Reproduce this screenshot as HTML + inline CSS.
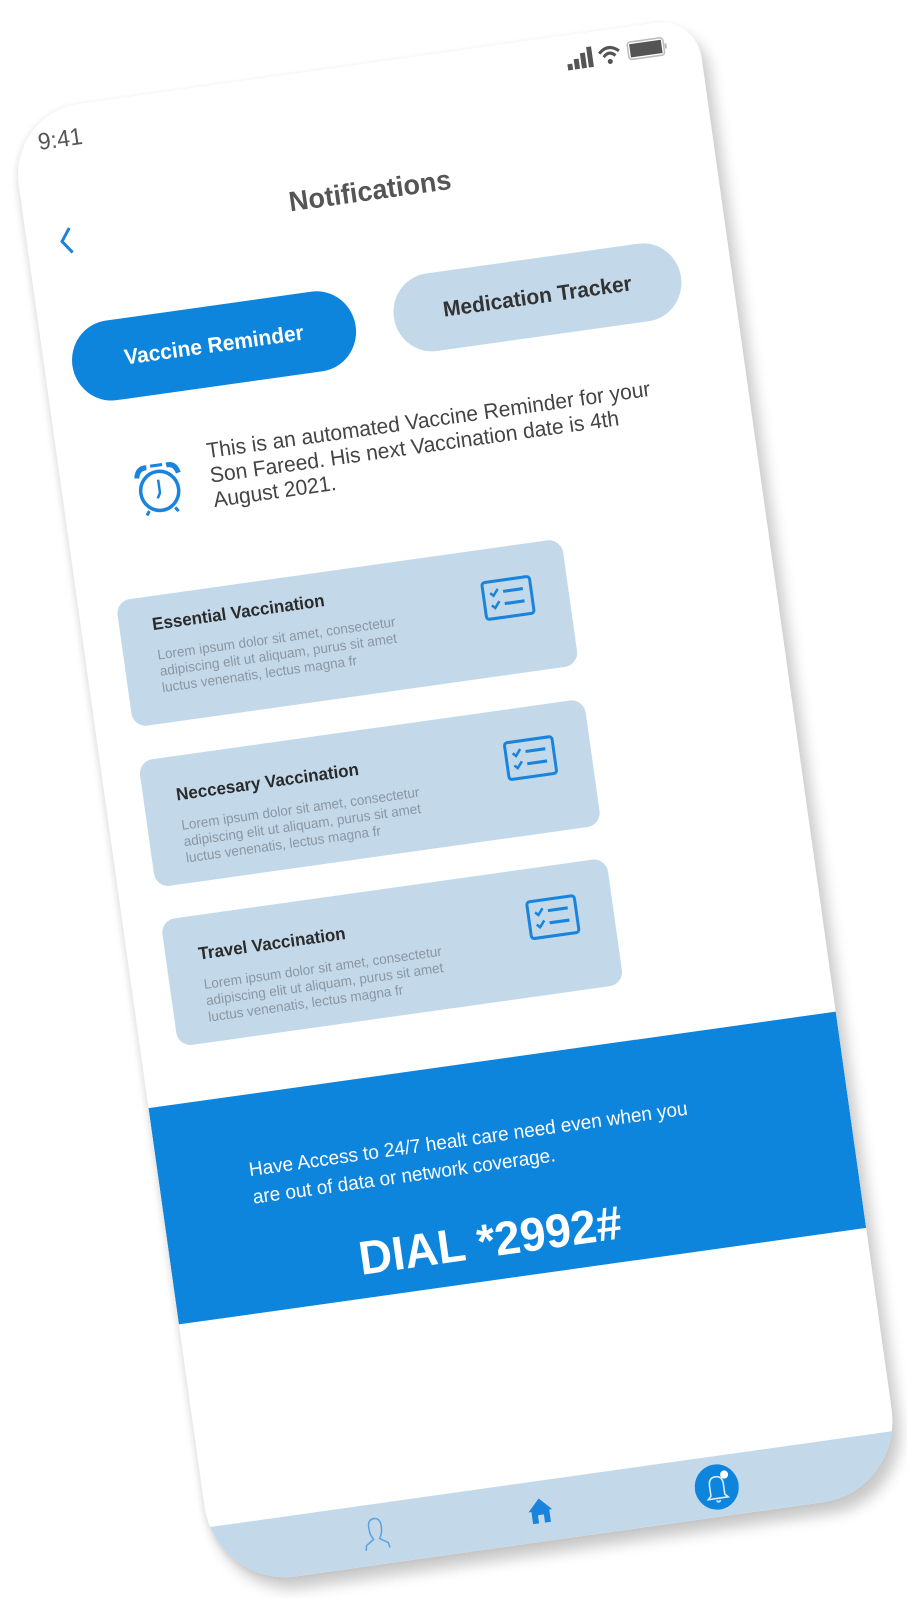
<!DOCTYPE html>
<html><head><meta charset="utf-8"><style>
html,body{margin:0;padding:0;background:#fff;}
body{width:907px;height:1598px;position:relative;overflow:hidden;font-family:"Liberation Sans",sans-serif;}
#phone{position:absolute;left:110px;top:80px;width:694px;height:1445px;background:#fff;border-radius:70px 40px 80px 80px;transform:rotate(-8deg) scaleY(1.03);transform-origin:347px 730px;box-shadow:6px 12px 14px rgba(0,0,0,0.22),-3px 0 5px rgba(0,0,0,0.06);overflow:hidden;}
.a{position:absolute;}
.btn{position:absolute;border-radius:40px;font-weight:bold;font-size:21px;text-align:center;}
.card{position:absolute;left:38px;width:450px;height:124px;background:#c3d9ea;border-radius:14px;}
.card h3{position:absolute;left:33px;top:18px;margin:0;font-size:17px;color:#2a2a2a;}
.card p{position:absolute;left:34px;top:50px;margin:0;font-size:13.5px;line-height:16px;color:#8a96a2;white-space:nowrap;}
.card svg{position:absolute;left:363px;top:30px;}
</style></head><body>
<div id="phone">
  <div class="a" style="left:25px;top:18px;font-size:23px;color:#555;">9:41</div>
  <div class="a" style="left:560px;top:12px;">
    <svg width="115" height="26" viewBox="0 0 115 26">
      <rect x="0" y="16" width="5" height="6" fill="#555"/><rect x="7" y="12" width="5" height="10" fill="#555"/><rect x="14" y="7" width="5" height="15" fill="#555"/><rect x="21" y="2" width="5" height="20" fill="#555"/>
      <path d="M33 10 Q43 1 53 10" stroke="#555" stroke-width="3" fill="none"/><path d="M37 14 Q43 8 49 14" stroke="#555" stroke-width="3" fill="none"/><circle cx="43" cy="19" r="2.5" fill="#555"/>
      <rect x="62" y="3" width="36" height="17" rx="3" fill="#fff" stroke="#bbb" stroke-width="1.5"/><rect x="64" y="5" width="32" height="13" fill="#555"/><rect x="99" y="9" width="2" height="5" fill="#bbb"/>
    </svg>
  </div>
  <div class="a" style="left:0;width:694px;top:108px;text-align:center;font-size:27px;font-weight:bold;color:#555;">Notifications</div>
  <svg class="a" style="left:30px;top:115px" width="20" height="30" viewBox="0 0 20 30"><path d="M14 3 L5 15 L14 27" stroke="#1a84dc" stroke-width="3" fill="none"/></svg>
  <div class="btn" style="left:28px;top:212px;width:286px;height:78px;line-height:78px;background:#0e85dc;color:#fff;">Vaccine Reminder</div>
  <div class="btn" style="left:353px;top:210px;width:290px;height:76px;line-height:76px;background:#c3d9ea;color:#333;">Medication Tracker</div>
  <svg class="a" style="left:70px;top:354px" width="54" height="54" viewBox="0 0 54 54">
    <circle cx="27" cy="29" r="19" stroke="#1a84dc" stroke-width="3.5" fill="none"/>
    <path d="M6 14 Q8 4 17 5" stroke="#1a84dc" stroke-width="5" fill="none"/><path d="M48 14 Q46 4 37 5" stroke="#1a84dc" stroke-width="5" fill="none"/>
    <path d="M21 4 H33" stroke="#1a84dc" stroke-width="3"/><path d="M27 18 V31 L24 36" stroke="#1a84dc" stroke-width="2.5" fill="none"/>
    <path d="M14 47 L11 51 M40 47 L43 51" stroke="#1a84dc" stroke-width="3"/>
  </svg>
  <div class="a" style="left:149px;top:340px;width:460px;font-size:21px;line-height:24px;color:#444;">This is an automated Vaccine Reminder for your Son Fareed. His next Vaccination date is 4th August 2021.</div>

  <div class="card" style="top:483px;"><h3>Essential Vaccination</h3><p>Lorem ipsum dolor sit amet, consectetur<br>adipiscing elit ut aliquam, purus sit amet<br>luctus venenatis, lectus magna fr</p>
    <svg width="52" height="40" viewBox="0 0 52 40"><rect x="2" y="2" width="48" height="36" rx="3" fill="none" stroke="#1a84dc" stroke-width="3"/><path d="M9 13 l3 3 5-6 M9 25 l3 3 5-6" stroke="#1a84dc" stroke-width="2.5" fill="none"/><path d="M22 13 H42 M22 25 H42" stroke="#1a84dc" stroke-width="3"/></svg></div>
  <div class="card" style="top:640px;"><h3 style="top:28px">Neccesary Vaccination</h3><p style="top:60px">Lorem ipsum dolor sit amet, consectetur<br>adipiscing elit ut aliquam, purus sit amet<br>luctus venenatis, lectus magna fr</p>
    <svg width="52" height="40" viewBox="0 0 52 40"><rect x="2" y="2" width="48" height="36" rx="3" fill="none" stroke="#1a84dc" stroke-width="3"/><path d="M9 13 l3 3 5-6 M9 25 l3 3 5-6" stroke="#1a84dc" stroke-width="2.5" fill="none"/><path d="M22 13 H42 M22 25 H42" stroke="#1a84dc" stroke-width="3"/></svg></div>
  <div class="card" style="top:796px;"><h3 style="top:28px">Travel Vaccination</h3><p style="top:60px">Lorem ipsum dolor sit amet, consectetur<br>adipiscing elit ut aliquam, purus sit amet<br>luctus venenatis, lectus magna fr</p>
    <svg width="52" height="40" viewBox="0 0 52 40"><rect x="2" y="2" width="48" height="36" rx="3" fill="none" stroke="#1a84dc" stroke-width="3"/><path d="M9 13 l3 3 5-6 M9 25 l3 3 5-6" stroke="#1a84dc" stroke-width="2.5" fill="none"/><path d="M22 13 H42 M22 25 H42" stroke="#1a84dc" stroke-width="3"/></svg></div>

  <div class="a" style="left:0;top:975px;width:694px;height:212px;background:#0e85dc;">
    <div class="a" style="left:91px;top:60px;font-size:19px;line-height:27px;color:#fff;white-space:nowrap;">Have Access to 24/7 healt care need even when you<br>are out of data or network coverage.</div>
    <div class="a" style="left:0;width:640px;top:146px;text-align:center;font-size:46px;font-weight:900;color:#fff;">DIAL *2992#</div>
  </div>

  <div class="a" style="left:0;top:1386px;width:694px;height:59px;background:#c3d9ea;">
    <svg class="a" style="left:152px;top:12px" width="28" height="34" viewBox="0 0 28 34"><path d="M14 2 C8 2 7 8 8 14 C8 18 10 20 11 22 L3 27 L2 32 M14 2 C20 2 21 8 20 14 C20 18 18 20 17 22 L25 27 L26 32" stroke="#5aa2e0" stroke-width="1.5" fill="none"/></svg>
    <svg class="a" style="left:318px;top:15px" width="28" height="28" viewBox="0 0 28 28"><path d="M14 2 L26 14 L23 14 L23 26 L17 26 L17 18 L11 18 L11 26 L5 26 L5 14 L2 14 Z" fill="#1a84dc"/></svg>
    <div class="a" style="left:488px;top:8px;width:44px;height:44px;border-radius:50%;background:#0e85dc;">
      <svg width="44" height="44" viewBox="0 0 44 44"><path d="M15 30 L15 20 Q15 12 22 12 Q29 12 29 20 L29 30 L32 33 L12 33 Z" stroke="#dbeaf6" stroke-width="1.6" fill="none"/><path d="M20 35 Q22 38 24 35" stroke="#dbeaf6" stroke-width="1.6" fill="none"/><circle cx="31" cy="11" r="4" fill="#fff"/></svg>
    </div>
  </div>
</div>
</body></html>
